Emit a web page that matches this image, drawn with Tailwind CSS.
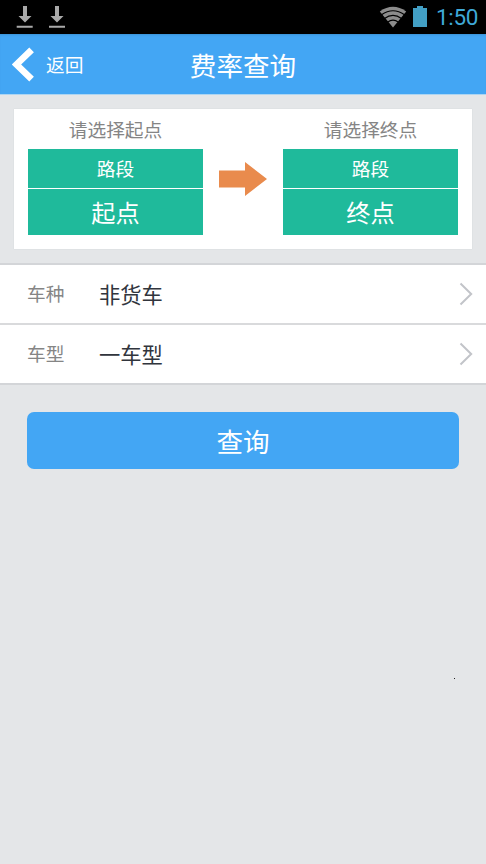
<!DOCTYPE html>
<html lang="zh-CN">
<head>
<meta charset="utf-8">
<title>费率查询</title>
<script src="https://cdn.jsdelivr.net/npm/@tailwindcss/browser@4"></script>
</head>
<body class="bg-[#e4e6e8] font-['Noto_Sans_CJK_SC',sans-serif] h-[864px] overflow-hidden">
<div class="relative h-[864px] flex flex-col">
  <div class="h-[34px] shrink-0 bg-black flex items-start">
    <svg class="ml-4 mt-1.5" width="50" height="22" viewBox="0 0 50 22" fill="#a9a9a9">
      <path d="M7 0h4v10h4.500l-6.500 6.500l-6.500-6.500h4.500zM.7 19.700h16v2h-16z"/>
      <path d="M39 0h4v10h4.500l-6.500 6.500l-6.500-6.500h4.500zM33 19.700h16v2h-16z"/>
    </svg>
    <svg class="ml-auto mt-1.5" width="28" height="22" viewBox="0 0 28 22">
      <path d="M.8 5.500Q14-3.800 27.200 5.500L14 21.500z" fill="#8c8c8c"/>
      <g fill="none" stroke="#000" stroke-width="1.200"><path d="M2.500 8.700Q14 .8 25.500 8.700M5.500 12.500Q14 6.300 22.500 12.500M8.500 16.200Q14 12 19.500 16.200"/></g>
    </svg>
    <svg class="ml-[6px] mt-1.5" width="14" height="21" viewBox="0 0 14 21"><path d="M4 0h6v2h4v19H0V2h4z" fill="#429fc5"/></svg>
    <div class="ml-[9px] mr-2 mt-1 w-[42px] h-[26px] leading-[27px] text-[22.500px] tracking-[-0.300px] text-[#3fa9d8] whitespace-nowrap font-[Roboto,sans-serif]">1:50</div>
  </div>
  <header class="h-[61px] shrink-0 bg-[#43a6f4] border-b border-[#add5f2] shadow-[inset_0_2px_2px_-1px_#3b91d5] grid grid-cols-[1fr_auto_1fr] items-center text-white">
    <div class="flex items-center pl-3">
      <svg width="22" height="35" viewBox="0 0 22 35"><path d="M19.600 2.800L4.500 17.500L19.600 32.200" fill="none" stroke="#fff" stroke-width="6.600"/></svg>
      <span class="ml-3 text-[18.700px] leading-7">返回</span>
    </div>
    <h1 class="text-[26.600px] leading-9 pt-0.5">费率查询</h1>
  </header>
  <section class="mt-[14px] mx-[14px] h-[140px] shrink-0 bg-white shadow-[0_0_1px_#c8ccd0] px-[14px] flex text-center">
    <div class="w-[175px]">
      <div class="h-10 leading-[39px] text-[18.700px] text-[#858585]">请选择起点</div>
      <div class="h-[39px] leading-[38px] bg-[#1fba9b] text-white text-[18.700px]">路段</div>
      <div class="mt-px h-[46px] leading-[45px] bg-[#1fba9b] text-white text-[24.200px]">起点</div>
    </div>
    <svg class="mx-4 mt-[53px]" width="48" height="35" viewBox="0 0 48 35"><path d="M0 8.500h26V0L48 17L26 34V25.500H0z" fill="#e98b4d"/></svg>
    <div class="w-[175px]">
      <div class="h-10 leading-[39px] text-[18.700px] text-[#858585]">请选择终点</div>
      <div class="h-[39px] leading-[38px] bg-[#1fba9b] text-white text-[18.700px]">路段</div>
      <div class="mt-px h-[46px] leading-[45px] bg-[#1fba9b] text-white text-[24.200px]">终点</div>
    </div>
  </section>
  <section class="mt-[14px] shrink-0 bg-white border-t-2 border-b-2 border-[#d3d5d8]">
    <div class="h-[60px] border-b-2 border-[#d9dadc] flex items-center pl-[27px] pr-[13px]">
      <span class="w-[72px] pb-px text-[18.700px] text-[#858585]">车种</span>
      <span class="text-[21.300px] text-[#31353d]">非货车</span>
      <svg class="ml-auto" width="14" height="24" viewBox="0 0 14 24"><path d="M1.500 1.500L12.200 12L1.500 22.500" fill="none" stroke="#c2c4c9" stroke-width="2"/></svg>
    </div>
    <div class="h-[58px] flex items-center pl-[27px] pr-[13px]">
      <span class="w-[72px] pb-px text-[18.700px] text-[#858585]">车型</span>
      <span class="text-[21.300px] text-[#31353d]">一车型</span>
      <svg class="ml-auto" width="14" height="24" viewBox="0 0 14 24"><path d="M1.500 1.500L12.200 12L1.500 22.500" fill="none" stroke="#c2c4c9" stroke-width="2"/></svg>
    </div>
  </section>
  <button class="mt-[27px] mx-[27px] h-[57px] shrink-0 rounded-[7px] bg-[#43a6f4] text-white text-[26.600px] leading-[57px]">查询</button>
  <i class="absolute left-[454px] top-[678px] w-px h-px bg-[#222]"></i>
</div>
</body>
</html>
